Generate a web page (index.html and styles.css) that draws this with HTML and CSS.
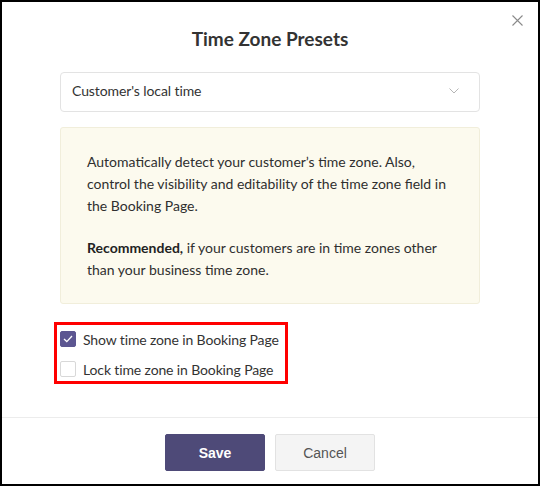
FILE: index.html
```html
<!DOCTYPE html>
<html lang="en">
<head>
<meta charset="utf-8"/>
<meta content="width=device-width, initial-scale=1.0" name="viewport"/>
<title>Time Zone Presets</title>
<link rel="stylesheet" href="styles.css">
</head>
<body>
<div class="dialog">
  <button class="close" aria-label="Close">
    <svg width="11" height="11" viewBox="0 0 11 11"><path d="M0.5 0.5 L10.5 10.5 M10.5 0.5 L0.5 10.5" stroke="#8a8a8a" stroke-width="1.1" fill="none"/></svg>
  </button>
  <h1 class="title">Time Zone Presets</h1>
  <div class="content">
    <div class="select">
      <span>Customer's local time</span>
      <svg width="10" height="6" viewBox="0 0 10 6"><path d="M0.5 0.5 L5 5 L9.5 0.5" stroke="#b5b5b5" stroke-width="1" fill="none"/></svg>
    </div>
    <div class="info">
      <p>Automatically detect your customer’s time zone. Also, control the visibility and editability of the time zone field in the Booking Page.</p>
      <p><strong>Recommended,</strong> if your customers are in time zones other than your business time zone.</p>
    </div>
    <div class="options">
      <label class="option">
        <span class="box checked">
          <svg width="10" height="8" viewBox="0 0 10 8"><path d="M1 4 L3.8 6.6 L9 1" stroke="#fff" stroke-width="1.3" fill="none"/></svg>
        </span>
        Show time zone in Booking Page
      </label>
      <label class="option">
        <span class="box"></span>
        Lock time zone in Booking Page
      </label>
    </div>
  </div>
  <div class="footer">
    <button class="btn save">Save</button>
    <button class="btn cancel">Cancel</button>
  </div>
</div>
</body>
</html>
```

FILE: styles.css
```css
html, body {
  margin: 0;
  height: 100%;
}
body {
  box-sizing: border-box;
  border: 2px solid #000;
  background: #fff;
  font-family: 'Lato', sans-serif;
  color: #333;
}
.dialog {
  position: relative;
  height: 100%;
  display: flex;
  flex-direction: column;
}
.close {
  position: absolute;
  top: 12px;
  right: 15px;
  background: none;
  border: none;
  padding: 0;
  cursor: pointer;
}
.title {
  margin: 25px 0 0;
  font-size: 19px;
  line-height: 24px;
  font-weight: 700;
  text-align: center;
  color: #333;
}
.content {
  padding: 0 58px;
}
.select {
  margin-top: 21px;
  height: 40px;
  box-sizing: border-box;
  border: 1px solid #e3e3e3;
  border-radius: 4px;
  display: flex;
  align-items: center;
  justify-content: space-between;
  padding: 0 20px 3px 11px;
  font-size: 14px;
  letter-spacing: -0.1px;
  color: #333;
}
.info {
  margin-top: 15px;
  background: #fcfaee;
  border: 1px solid #f1eedb;
  border-radius: 3px;
  padding: 23px 26px 22px;
  font-size: 14px;
  line-height: 22px;
  color: #2f2f2f;
}
.info p {
  margin: 0;
}
.info p + p {
  margin-top: 20px;
}
.info strong {
  color: #222;
}
.options {
  margin: 18px 0 0 -6px;
  width: fit-content;
  border: 3px solid #ff0000;
  padding: 6px 6px 4px 3px;
  display: flex;
  flex-direction: column;
  gap: 14px;
}
.option {
  display: flex;
  align-items: center;
  gap: 7px;
  height: 16px;
  font-size: 14px;
  letter-spacing: -0.13px;
  color: #333;
}
.box {
  width: 16px;
  height: 16px;
  box-sizing: border-box;
  border: 1px solid #d8d8d8;
  border-radius: 2px;
  display: flex;
  align-items: center;
  justify-content: center;
  background: #fff;
}
.box.checked {
  background: #5c5691;
  border-color: #5c5691;
}
.footer {
  margin-top: auto;
  border-top: 1px solid #ececec;
  padding: 16px 0 13px;
  display: flex;
  justify-content: center;
  gap: 10px;
}
.btn {
  width: 100px;
  height: 37px;
  border-radius: 2px;
  font-family: 'Liberation Sans', Arial, sans-serif;
  font-size: 14px;
  cursor: pointer;
}
.save {
  background: #4e4a78;
  border: 1px solid #4e4a78;
  color: #fff;
  font-weight: bold;
}
.cancel {
  background: #f4f4f4;
  border: 1px solid #e2e2e2;
  color: #555;
}
```
